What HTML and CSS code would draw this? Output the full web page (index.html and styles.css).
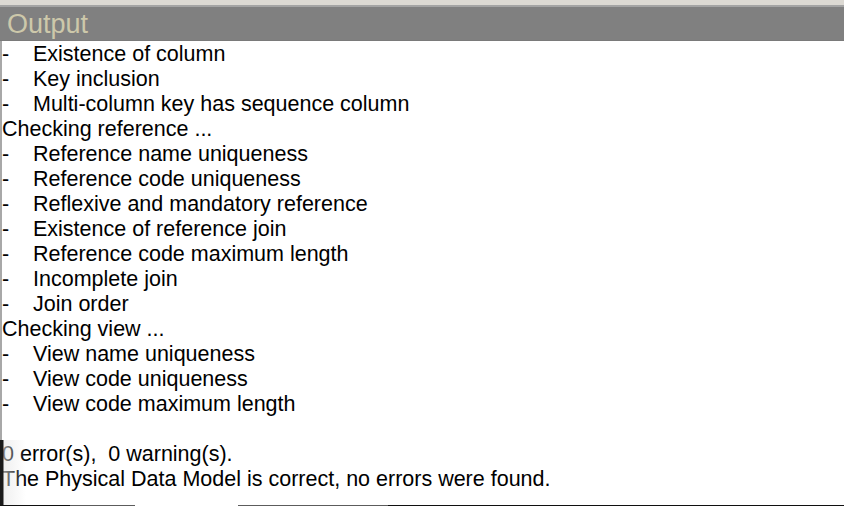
FILE: index.html
```html
<!DOCTYPE html>
<html>
<head>
<meta charset="utf-8">
<link rel="stylesheet" href="styles.css">
</head>
<body>
<div class="window">
  <div class="topstrip"></div>
  <div class="header">Output</div>
  <div class="content">
    <div class="line"><span class="dash">-</span>Existence of column</div>
    <div class="line"><span class="dash">-</span>Key inclusion</div>
    <div class="line"><span class="dash">-</span>Multi-column key has sequence column</div>
    <div class="line">Checking reference ...</div>
    <div class="line"><span class="dash">-</span>Reference name uniqueness</div>
    <div class="line"><span class="dash">-</span>Reference code uniqueness</div>
    <div class="line"><span class="dash">-</span>Reflexive and mandatory reference</div>
    <div class="line"><span class="dash">-</span>Existence of reference join</div>
    <div class="line"><span class="dash">-</span>Reference code maximum length</div>
    <div class="line"><span class="dash">-</span>Incomplete join</div>
    <div class="line"><span class="dash">-</span>Join order</div>
    <div class="line">Checking view ...</div>
    <div class="line"><span class="dash">-</span>View name uniqueness</div>
    <div class="line"><span class="dash">-</span>View code uniqueness</div>
    <div class="line"><span class="dash">-</span>View code maximum length</div>
    <div class="line">&nbsp;</div>
    <div class="line">0 error(s),&nbsp; 0 warning(s).</div>
    <div class="line">The Physical Data Model is correct, no errors were found.</div>
  </div>
  <div class="edge-shadow"></div>
  <div class="bottom-bar">
    <span class="seg seg-black1"></span>
    <span class="seg seg-gray1"></span>
    <span class="seg seg-white"></span>
    <span class="seg seg-gray2"></span>
    <span class="seg seg-black2"></span>
  </div>
</div>
</body>
</html>
```
FILE: styles.css
```css
html, body {
  margin: 0;
  padding: 0;
  background: #ffffff;
}
.window {
  position: relative;
  width: 844px;
  height: 506px;
  overflow: hidden;
  background: #ffffff;
  font-family: "Liberation Sans", Arial, sans-serif;
}
.topstrip {
  height: 5px;
  background: #dcd9d3;
  border-bottom: 2px solid #a4a4a4;
}
.header {
  height: 33px;
  background: #808080;
  color: #cdc8aa;
  font-size: 27px;
  line-height: 34px;
  padding-left: 7px;
  border-bottom: 1px solid #7a7a7a;
}
.content {
  border-left: 2px solid #a8a8a8;
  padding-top: 1px;
  height: 464px;
  color: #000000;
  font-size: 21.5px;
}
.line {
  height: 25px;
  line-height: 25px;
  white-space: nowrap;
}
.dash {
  display: inline-block;
  width: 31px;
}
.edge-shadow {
  position: absolute;
  left: 0;
  top: 440px;
  width: 26px;
  height: 66px;
  background: linear-gradient(to right, #1a1a1a 0, #1a1a1a 3px, rgba(230,230,230,0.6) 4px, rgba(255,255,255,0) 26px);
}
.bottom-bar {
  position: absolute;
  left: 0;
  bottom: 0;
  width: 844px;
  height: 1px;
  display: flex;
}
.seg { display: block; height: 1px; }
.seg-black1 { width: 70px; background: #101010; }
.seg-gray1 { width: 65px; background: #5c5c5c; }
.seg-white { width: 103px; background: #ffffff; }
.seg-gray2 { width: 150px; background: #5c5c5c; }
.seg-black2 { flex: 1; background: #101010; }
```
